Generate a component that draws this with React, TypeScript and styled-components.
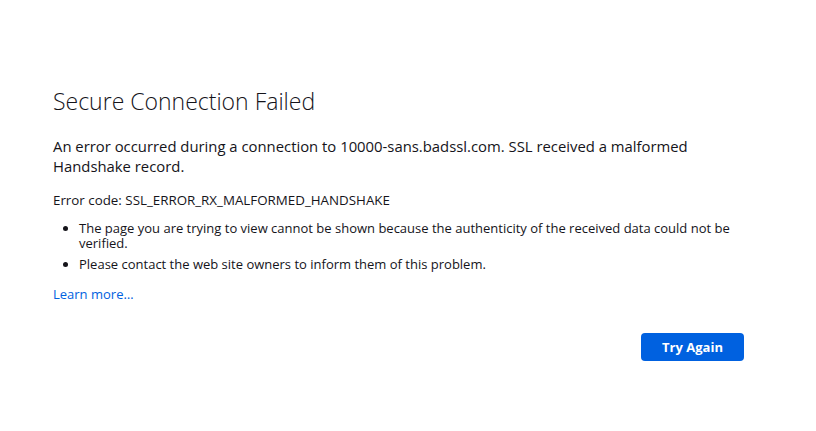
import React from "react";
import styled, { createGlobalStyle } from "styled-components";

const Global = createGlobalStyle`
  html, body { margin: 0; padding: 0; background: #fff; }
  body { font-family: "Open Sans", "Noto Sans", sans-serif; color: #15141a; }
`;

const Page = styled.div`
  width: 816px;
  height: 431px;
  display: flex;
  justify-content: flex-start;
  padding-left: 53px;
  padding-top: 83px;
  box-sizing: border-box;
`;

const Container = styled.div`
  width: 691px;
  display: flex;
  flex-direction: column;
`;

const Title = styled.h1`
  margin: 0;
  font-size: 23px;
  font-weight: 300;
  line-height: 36px;
`;

const Lead = styled.p`
  margin: 17px 0 0;
  font-size: 14.85px;
  line-height: 20px;
  padding-right: 40px;
`;

const Code = styled.p`
  margin: 15px 0 0;
  font-size: 13.35px;
  line-height: 18px;
`;

const List = styled.ul`
  margin: 12px 0 0;
  padding-left: 26px;
  font-size: 13px;
  line-height: 15px;
`;

const Item = styled.li`
  margin-bottom: 6px;
`;

const Link = styled.a`
  margin-top: 7px;
  font-size: 13px;
  line-height: 18px;
  color: #0061e0;
  text-decoration: none;
  align-self: flex-start;
`;

const Actions = styled.div`
  display: flex;
  justify-content: flex-end;
  margin-top: 30px;
`;

const Button = styled.button`
  width: 103px;
  height: 28px;
  border: none;
  border-radius: 4px;
  background: #0061e0;
  color: #fff;
  font-family: inherit;
  font-size: 13px;
  font-weight: 700;
`;

export default function App() {
  return (
    <>
      <Global />
      <Page>
        <Container>
          <Title>Secure Connection Failed</Title>
          <Lead>
            An error occurred during a connection to 10000-sans.badssl.com. SSL received a malformed
            Handshake record.
          </Lead>
          <Code>Error code: SSL_ERROR_RX_MALFORMED_HANDSHAKE</Code>
          <List>
            <Item>
              The page you are trying to view cannot be shown because the authenticity of the received data could not be verified.
            </Item>
            <Item>Please contact the web site owners to inform them of this problem.</Item>
          </List>
          <Link href="#">Learn more…</Link>
          <Actions>
            <Button>Try Again</Button>
          </Actions>
        </Container>
      </Page>
    </>
  );
}
